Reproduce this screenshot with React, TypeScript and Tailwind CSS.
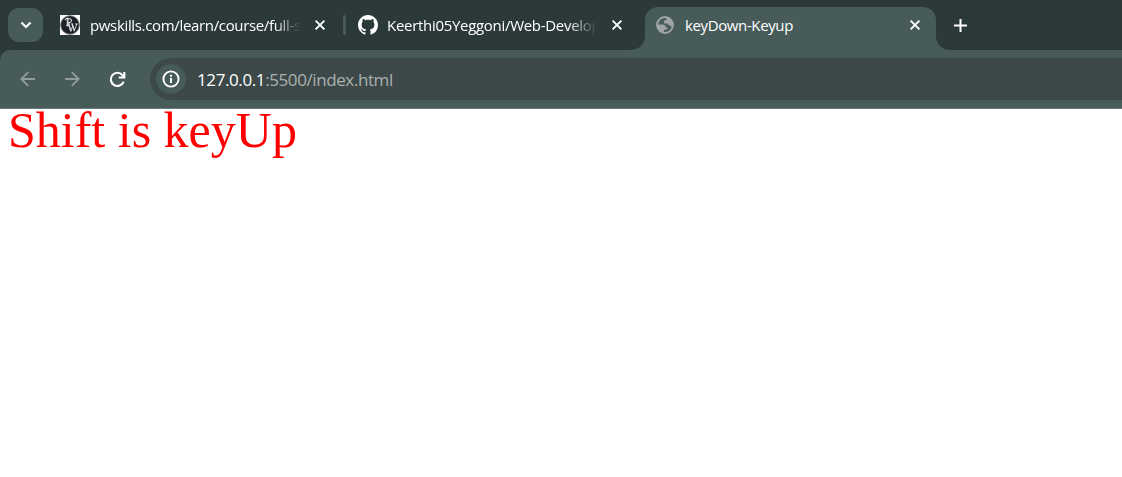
import React from "react";

const uiFont = "font-['Open_Sans','Noto_Sans',sans-serif]";

function CloseIcon() {
  return (
    <svg width="12" height="12" viewBox="0 0 12 12" className="shrink-0" fill="none" stroke="#fff" strokeWidth="1.9">
      <path d="M1.600 1.600l8.800 8.800M10.400 1.600l-8.800 8.800" />
    </svg>
  );
}

function PwIcon() {
  return (
    <svg width="20" height="20" viewBox="0 0 20 20" className="shrink-0">
      <rect width="20" height="20" fill="#fff" />
      <circle cx="10" cy="10" r="9.3" fill="#1b2127" stroke="#777b7e" strokeWidth="0.9" />
      <g fill="none" stroke="#d4d7d9" strokeLinecap="round">
        <path d="M7.600 3.600v6.800" strokeWidth="1.7" />
        <path d="M5.200 4.600C6.500 3 11.400 2.800 11.400 5.400c0 1.700-1.600 2.400-3.400 2.300M6.400 10.500h2.500" strokeWidth="1.100" />
        <path d="M8.600 9.200l2.300 6.600M12 8.800l2.300 6.700" strokeWidth="1.600" />
        <path d="M10.900 15.800l1.900-5M14.300 15.500l2.600-6.300M7.500 9h2.200M15.400 9h2" strokeWidth="0.900" />
      </g>
    </svg>
  );
}

function GithubIcon() {
  return (
    <svg width="20" height="20" viewBox="0 0 16 16" className="shrink-0" fill="#fff">
      <path d="M8 0C3.58 0 0 3.58 0 8c0 3.54 2.29 6.53 5.47 7.59.4.07.55-.17.55-.38 0-.19-.01-.82-.01-1.49-2.01.37-2.53-.49-2.69-.94-.09-.23-.48-.94-.82-1.13-.28-.15-.68-.52-.01-.53.63-.01 1.08.58 1.23.82.72 1.21 1.87.87 2.33.66.07-.52.28-.87.51-1.07-1.78-.2-3.64-.89-3.64-3.95 0-.87.31-1.59.82-2.15-.08-.2-.36-1.02.08-2.12 0 0 .67-.21 2.2.82.64-.18 1.32-.27 2-.27s1.36.09 2 .27c1.53-1.04 2.2-.82 2.2-.82.44 1.1.16 1.92.08 2.12.51.56.82 1.27.82 2.15 0 3.07-1.87 3.75-3.65 3.95.29.25.54.73.54 1.48 0 1.07-.01 1.93-.01 2.2 0 .21.15.46.55.38A8.01 8.01 0 0 0 16 8c0-4.42-3.58-8-8-8z" />
    </svg>
  );
}

function GlobeIcon() {
  return (
    <svg width="18" height="18" viewBox="0 0 18 18" className="shrink-0">
      <circle cx="9" cy="9" r="7.9" fill="none" stroke="#a0a4a9" strokeWidth="2" />
      <path d="M10.3 1.5c3.6.6 6.3 3.5 6.3 7.2l-.4 2.2c-1-.1-1.5-.6-1.7-1.6-.8.5-2.1.2-2.3-.8l-.2-1.1H9.2c-.8 0-1.4-.7-1.4-1.5 0-1 .6-1.7 1.6-1.7h.8z" fill="#a0a4a9" />
      <path d="M1.3 8.6h5.2c2.2 0 3.2 1 3.2 2.7h1.7v2.1c-1.6 0-3.5-.1-3.5 1.2v2.2C4 16.500 1.300 13 1.300 8.600z" fill="#a0a4a9" />
    </svg>
  );
}

export default function App() {
  return (
    <div className={`flex h-[477px] w-[1122px] flex-col overflow-hidden bg-white ${uiFont}`}>
      <header className="flex h-[50px] shrink-0 bg-[#475b59] text-[15px] text-white">
        <div className="flex w-[645px] shrink-0 items-center rounded-br-[14px] bg-[#2c3939]">
          <button className="ml-2 flex h-[34px] w-[35px] shrink-0 items-center justify-center rounded-[11px] bg-[#475b59]">
            <svg width="12" height="8" viewBox="0 0 12 8" fill="none" stroke="#fff" strokeWidth="2.1">
              <path d="M1.400 1.500L6 6l4.600-4.500" />
            </svg>
          </button>
          <div className="ml-[17px] flex w-[266px] shrink-0 items-center">
            <PwIcon />
            <span className="ml-[10px] w-[210px] shrink-0 overflow-hidden whitespace-nowrap tracking-[-0.34px] [mask-image:linear-gradient(to_right,black_88%,transparent)]">
              pwskills.com/learn/course/full-stack
            </span>
            <span className="ml-auto flex"><CloseIcon /></span>
          </div>
          <div className="ml-[17px] h-5 w-[3px] shrink-0 rounded-full bg-[#475b59]" />
          <div className="ml-[12px] flex w-[265px] shrink-0 items-center">
            <GithubIcon />
            <span className="ml-[9px] w-[210px] shrink-0 overflow-hidden whitespace-nowrap tracking-[-0.3px] [mask-image:linear-gradient(to_right,black_86%,transparent)]">
              Keerthi05Yeggoni/Web-Development
            </span>
            <span className="ml-auto flex"><CloseIcon /></span>
          </div>
        </div>
        <div className="w-[291px] shrink-0 bg-[#2c3939] pt-[7px]">
          <div className="flex h-[43px] items-center rounded-t-[13px] bg-[#475b59] pr-[15px] pb-[7px] pl-[11px]">
            <GlobeIcon />
            <span className="ml-[11px] whitespace-nowrap tracking-[-0.38px]">keyDown-Keyup</span>
            <span className="ml-auto flex"><CloseIcon /></span>
          </div>
        </div>
        <div className="flex flex-1 items-center rounded-bl-[14px] bg-[#2c3939] pl-[18px]">
          <svg width="13" height="13" viewBox="0 0 13 13" fill="none" stroke="#fff" strokeWidth="2">
            <path d="M6.500 0v13M0 6.500h13" />
          </svg>
        </div>
      </header>

      <div className="h-[59px] shrink-0 bg-[#2c3939]">
        <div className="flex h-full items-center rounded-tl-[10px] border-b border-[#6c7c7a] bg-[#475b59] pl-5">
          <svg width="16" height="16" viewBox="0 0 16 16" fill="none" stroke="#919c9b" strokeWidth="1.9">
            <path d="M15 8H1.600M8.200 1.200L1.400 8l6.800 6.800" />
          </svg>
          <svg width="16" height="16" viewBox="0 0 16 16" className="ml-7" fill="none" stroke="#919c9b" strokeWidth="1.9">
            <path d="M1 8h13.400M7.800 1.200L14.600 8l-6.800 6.800" />
          </svg>
          <svg width="17" height="17" viewBox="0 0 17 17" className="ml-[29px]" fill="none" stroke="#fff" strokeWidth="2.1">
            <path d="M14.600 10.600A6.600 6.600 0 1 1 13.500 4.200L15.100 6" />
            <path d="M15.300 1v5.500H9.800" />
          </svg>
          <div className="ml-6 flex h-[42px] flex-1 items-center rounded-l-full bg-[#3c4948] pl-[6px]">
            <div className="flex size-[30px] items-center justify-center rounded-full bg-[#475b59]">
              <svg width="18" height="18" viewBox="0 0 18 18" fill="none" stroke="#fff" strokeWidth="1.9">
                <circle cx="9" cy="9" r="7.600" />
                <path d="M9 8v5M9 4.700v2" />
              </svg>
            </div>
            <span className="mt-px ml-[11px] text-[17px] leading-6 tracking-[-0.4px] whitespace-nowrap text-white">
              127.0.0.1<span className="text-[#aab2b1]">:5500/index.html</span>
            </span>
          </div>
        </div>
      </div>

      <main className="flex-1 bg-white pl-2">
        <p className="font-['Liberation_Serif',serif] text-[50px] leading-[42px] text-[#ff0000]">Shift is keyUp</p>
      </main>
    </div>
  );
}
